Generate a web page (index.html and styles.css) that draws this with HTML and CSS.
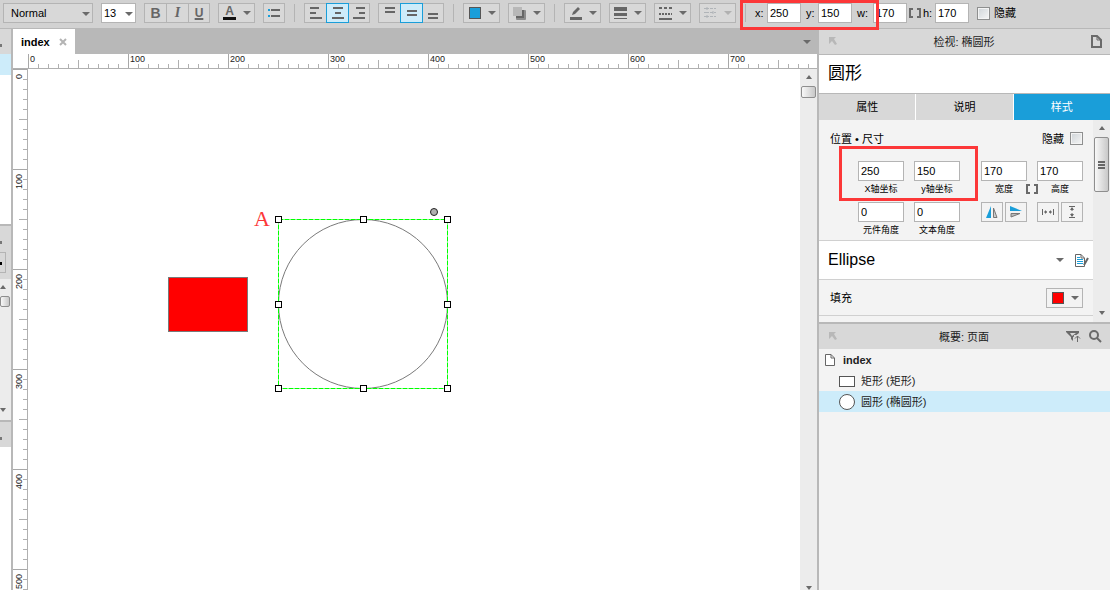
FILE: index.html
```html
<!DOCTYPE html>
<html lang="zh-CN">
<head>
<meta charset="utf-8">
<title>index</title>
<link rel="stylesheet" href="styles.css">
</head>
<body>
<svg class="defs" width="0" height="0" aria-hidden="true">
  <symbol id="caret" viewBox="0 0 8 4"><path d="M0 0H8L4 4Z" fill="#6a6a6a"/></symbol>
  <symbol id="up" viewBox="0 0 6 4"><path d="M3 0L6 4H0Z" fill="#6a6a6a"/></symbol>
  <symbol id="down" viewBox="0 0 6 4"><path d="M0 0H6L3 4Z" fill="#6a6a6a"/></symbol>
  <symbol id="brackets" viewBox="0 0 12 10"><path d="M4 1H1V9H4M8 1H11V9H8" fill="none" stroke="#6a6a6a" stroke-width="2"/></symbol>
  <symbol id="dock" viewBox="0 0 9 9"><path d="M1 0H8L6 2L9 7L7 8L4 4L1 7Z" fill="#b8b8b8"/></symbol>
</svg>
<div class="app">
  <header class="toolbar">
    <div class="combo font-style"><select aria-label="样式"><option>Normal</option></select><svg class="caret"><use href="#caret"/></svg></div>
    <div class="combo font-size"><select aria-label="字号"><option>13</option></select><svg class="caret"><use href="#caret"/></svg></div>
    <div class="group">
      <button class="tool bold" aria-label="粗体">B</button>
      <button class="tool italic" aria-label="斜体">I</button>
      <button class="tool underline" aria-label="下划线">U</button>
    </div>
    <button class="tool drop" aria-label="文字颜色"><span class="glyph">A</span><svg class="caret"><use href="#caret"/></svg></button>
    <button class="tool" aria-label="项目符号"><svg width="12" height="10"><path d="M0 2H2M0 8H2" stroke="#1a9ed9" stroke-width="2"/><path d="M3 2H12M3 8H12" stroke="#666" stroke-width="2"/></svg></button>
    <span class="sep"></span>
    <div class="group">
      <button class="tool" aria-label="左对齐"><svg width="12" height="12"><path d="M0 1H9M0 6H6M0 11H12" stroke="#666" stroke-width="2"/></svg></button>
      <button class="tool on" aria-label="居中"><svg width="12" height="12"><path d="M1 1H11M3 6H9M0 11H12" stroke="#666" stroke-width="2"/></svg></button>
      <button class="tool" aria-label="右对齐"><svg width="12" height="12"><path d="M3 1H12M6 6H12M0 11H12" stroke="#666" stroke-width="2"/></svg></button>
    </div>
    <div class="group">
      <button class="tool" aria-label="顶部对齐"><svg width="10" height="12"><path d="M0 1H10M0 5H10" stroke="#666" stroke-width="2"/></svg></button>
      <button class="tool on" aria-label="垂直居中"><svg width="10" height="12"><path d="M0 4H10M0 8H10" stroke="#666" stroke-width="2"/></svg></button>
      <button class="tool" aria-label="底部对齐"><svg width="10" height="12"><path d="M0 7H10M0 11H10" stroke="#666" stroke-width="2"/></svg></button>
    </div>
    <span class="sep"></span>
    <button class="tool drop" aria-label="填充"><span class="swatch blue"></span><svg class="caret"><use href="#caret"/></svg></button>
    <button class="tool drop" aria-label="阴影"><svg width="13" height="13"><rect x="3" y="3" width="10" height="10" rx="1" fill="#8c8c8c"/><rect x="3" y="3" width="8" height="8" fill="#666"/><rect x="0" y="0" width="9" height="9" fill="#b8b8b8"/></svg><svg class="caret"><use href="#caret"/></svg></button>
    <span class="sep"></span>
    <button class="tool drop" aria-label="线条颜色"><svg width="14" height="13"><path d="M1 11.500H13" stroke="#666" stroke-width="3"/><path d="M3 8L4 5L9 0L11 2L6 7Z" fill="#666"/></svg><svg class="caret"><use href="#caret"/></svg></button>
    <button class="tool drop" aria-label="线宽"><svg width="13" height="13"><path d="M0 2H13" stroke="#666" stroke-width="4"/><path d="M0 7.500H13" stroke="#666" stroke-width="3"/><path d="M0 11.500H13" stroke="#666"/></svg><svg class="caret"><use href="#caret"/></svg></button>
    <button class="tool drop" aria-label="线型"><svg width="13" height="13"><path d="M0 1H13" stroke="#666" stroke-width="2" stroke-dasharray="3 2"/><path d="M0 7H13" stroke="#666" stroke-width="2" stroke-dasharray="2 1"/><path d="M0 12H13" stroke="#666" stroke-width="2"/></svg><svg class="caret"><use href="#caret"/></svg></button>
    <button class="tool drop" disabled aria-label="箭头"><svg width="13" height="12"><path d="M0 1.500H12M0 5.500H12M0 9.500H12" stroke="#b0b4b8" stroke-dasharray="5 1 3 1"/><path d="M3 0V3M9 4V7M3 8V11" stroke="#b0b4b8"/></svg><svg class="caret faint"><use href="#caret"/></svg></button>
    <span class="sep"></span>
    <div class="coords">
      <label for="tx">x:</label><input id="tx" value="250">
      <label for="ty">y:</label><input id="ty" value="150">
      <label for="tw">w:</label><input id="tw" value="170">
      <svg class="lock" width="12" height="10"><use href="#brackets"/></svg>
      <label for="th">h:</label><input id="th" value="170">
    </div>
    <label class="check"><input type="checkbox">隐藏</label>
    <span class="mark mark-toolbar"></span>
  </header>

  <div class="workspace">
    <aside class="sliver">
      <div class="sliver-head"><i class="dot"></i></div>
      <div class="sliver-active"></div>
      <div class="sliver-page"></div>
      <div class="sliver-library"><i class="dot"></i><div class="sliver-drop"><i class="dot"></i></div></div>
      <div class="sliver-scroll"><svg class="arrow"><use href="#up"/></svg><span class="thumb"></span><svg class="arrow last"><use href="#down"/></svg></div>
      <div class="sliver-head second"><i class="dot"></i></div>
    </aside>

    <main class="editor">
      <div class="tabbar">
        <div class="page-tab">index <button class="close" aria-label="关闭"><svg width="8" height="8"><path d="M1 1L7 7M7 1L1 7" stroke="#b4b4b4" stroke-width="2"/></svg></button></div>
        <svg class="caret"><use href="#caret"/></svg>
      </div>
      <div class="ruler ruler-x"><span>0</span><span>100</span><span>200</span><span>300</span><span>400</span><span>500</span><span>600</span><span>700</span></div>
      <div class="stage">
        <div class="ruler ruler-y"><span><b>0</b></span><span><b>100</b></span><span><b>200</b></span><span><b>300</b></span><span><b>400</b></span><span><b>500</b></span></div>
        <div class="canvas">
          <div class="shape-rect"></div>
          <span class="note">A</span>
          <svg class="selection" width="178" height="189" viewBox="0 0 178 189">
            <circle cx="89" cy="100" r="84.500" fill="#fff" stroke="#7a7a7a"/>
            <path d="M4.500 15.500H173.500V184.500H4.500Z" fill="none" stroke="#0f0" stroke-dasharray="5 1"/>
            <circle cx="160" cy="8" r="3.500" fill="#b0b0b0" stroke="#222"/>
            <g fill="#fff" stroke="#000">
              <rect x="1.500" y="12.500" width="6" height="6"/><rect x="86.500" y="12.500" width="6" height="6"/><rect x="170.500" y="12.500" width="6" height="6"/>
              <rect x="1.500" y="97.500" width="6" height="6"/><rect x="170.500" y="97.500" width="6" height="6"/>
              <rect x="1.500" y="181.500" width="6" height="6"/><rect x="86.500" y="181.500" width="6" height="6"/><rect x="170.500" y="181.500" width="6" height="6"/>
            </g>
          </svg>
        </div>
        <div class="scroll canvas-scroll"><svg class="arrow"><use href="#up"/></svg><span class="thumb"></span><svg class="arrow last"><use href="#down"/></svg></div>
      </div>
    </main>

    <aside class="inspector">
      <div class="panel-head">
        <svg width="9" height="9"><use href="#dock"/></svg>
        <span class="panel-title">检视: 椭圆形</span>
        <svg width="11" height="13"><path d="M1 1H6L10 5V12H1Z" fill="none" stroke="#6a6a6a" stroke-width="2"/><path d="M6 1V5H10" fill="none" stroke="#6a6a6a"/></svg>
      </div>
      <div class="shape-name">圆形</div>
      <nav class="tabs"><button>属性</button><button>说明</button><button class="active">样式</button></nav>
      <div class="props">
        <div class="props-body">
          <section class="geometry">
            <div class="geometry-head"><span>位置 • 尺寸</span><label class="check reverse">隐藏<input type="checkbox"></label></div>
            <div class="fields">
              <div class="pair">
                <div class="field"><input id="px" value="250"><label for="px">X轴坐标</label></div>
                <div class="field"><input id="py" value="150"><label for="py">y轴坐标</label></div>
              </div>
              <div class="pair">
                <div class="field"><input id="pw" value="170"><label for="pw">宽度</label></div>
                <div class="field"><input id="ph" value="170"><label for="ph">高度</label></div>
                <svg class="link" width="12" height="10"><use href="#brackets"/></svg>
              </div>
              <div class="pair">
                <div class="field"><input id="pa" value="0"><label for="pa">元件角度</label></div>
                <div class="field"><input id="pt" value="0"><label for="pt">文本角度</label></div>
              </div>
              <div class="pair">
                <div class="icons">
                  <button aria-label="水平翻转"><svg width="12" height="12"><path d="M0 12L5 0V12Z" fill="#1a9ed9"/><path d="M7.500 2V11.500H11Z" fill="#ccc" stroke="#777"/></svg></button>
                  <button aria-label="垂直翻转"><svg width="12" height="12"><path d="M0 0L12 5H0Z" fill="#1a9ed9"/><path d="M1 7.500H10L1 11Z" fill="#bbb" stroke="#777"/></svg></button>
                </div>
                <div class="icons">
                  <button aria-label="适合宽度"><svg width="12" height="8"><path d="M.5 1V7M11.500 1V7M2 4H5M7 4H10" stroke="#666"/><path d="M5 4L3 2V6ZM7 4L9 2V6Z" fill="#666"/></svg></button>
                  <button aria-label="适合高度"><svg width="8" height="12"><path d="M1 .5H7M1 11.500H7M4 2V5M4 7V10" stroke="#666"/><path d="M4 1L2 4H6ZM4 11L2 8H6Z" fill="#666"/></svg></button>
                </div>
              </div>
            </div>
            <span class="mark mark-geometry"></span>
          </section>
          <div class="style-row">
            <span>Ellipse</span>
            <svg class="caret"><use href="#caret"/></svg>
            <svg width="14" height="13"><path d="M.5 .5H6L9.500 4V12.500H.5Z" fill="#fff" stroke="#666"/><path d="M6 .5V4H9" fill="none" stroke="#666"/><path d="M2 3.500H5M2 5.500H8M2 7.500H8M2 9.500H8" stroke="#1a9ed9"/><path d="M13 4L9 11" stroke="#666" stroke-width="2"/></svg>
          </div>
          <div class="fill-row"><span>填充</span><button class="fill-button" aria-label="填充颜色"><span class="swatch red"></span><svg class="caret"><use href="#caret"/></svg></button></div>
        </div>
        <div class="scroll props-scroll"><svg class="arrow"><use href="#up"/></svg><span class="thumb"><i class="grip"></i></span><svg class="arrow last"><use href="#down"/></svg></div>
      </div>
      <div class="panel-head outline-head">
        <svg width="9" height="9"><use href="#dock"/></svg>
        <span class="panel-title">概要: 页面</span>
        <svg width="15" height="11"><path d="M0 0H13V2L9 5L7 6V10L5 8V6L0 1Z" fill="#6a6a6a"/><path d="M4 2H10L6 5Z" fill="#d8d8d8"/><path d="M8 4H15V11H8Z" fill="#d8d8d8"/><path d="M11.500 11V5M9 7.500L11.500 5L14 7.500" fill="none" stroke="#6a6a6a"/></svg>
        <svg width="13" height="13"><circle cx="5" cy="5" r="4" fill="none" stroke="#6a6a6a" stroke-width="2"/><path d="M8 8L12 12" stroke="#6a6a6a" stroke-width="2"/></svg>
      </div>
      <ul class="outline">
        <li class="root"><svg width="10" height="12"><path d="M.5 .5H6L9.500 4V11.500H.5Z" fill="#fff" stroke="#666"/><path d="M6 .5V4H9" fill="none" stroke="#666"/></svg>index</li>
        <li><svg width="16" height="16"><rect x=".5" y="3.500" width="15" height="10" fill="#fff" stroke="#555"/></svg>矩形 (矩形)</li>
        <li class="selected"><svg width="16" height="16"><circle cx="8" cy="8" r="7.500" fill="#fff" stroke="#555"/></svg>圆形 (椭圆形)</li>
      </ul>
    </aside>
  </div>
</div>
</body>
</html>
```
FILE: styles.css
```css
* { box-sizing: border-box; }
body {
  margin: 0;
  font: 11px/14px "Liberation Sans", "Noto Sans CJK SC", sans-serif;
  color: #000;
}
button, input, select { font: inherit; color: inherit; border-radius: 0; margin: 0; padding: 0; }
svg { flex: none; display: block; }
.defs { position: absolute; }
.caret { width: 8px; height: 4px; }
.faint { opacity: .35; }
.arrow { width: 6px; height: 4px; }
.arrow.last { margin-top: auto; }
.app { height: 100vh; display: flex; flex-direction: column; overflow: hidden; }

/* Toolbar */
.toolbar {
  position: relative;
  flex: none;
  display: flex;
  gap: 8px;
  padding: 3px 3px 5px;
  background: #d2d2d2;
  border-bottom: 1px solid #b8b8b8;
}
.combo { position: relative; height: 20px; }
.combo select {
  appearance: none;
  width: 100%;
  height: 20px;
  padding: 0 16px 0 7px;
  border: 1px solid #b4b4b4;
  background: #d8d8d8;
}
.combo .caret { position: absolute; right: 3px; top: 9px; pointer-events: none; }
.font-style { width: 90px; }
.font-size { width: 35px; }
.font-size select { background: #fff; padding: 0 12px 0 2px; }
.group { display: flex; }
.tool {
  width: 23px;
  height: 20px;
  display: flex;
  align-items: center;
  justify-content: center;
  border: 1px solid #b4b4b4;
  background: #d8d8d8;
  color: #666;
}
.toolbar > .tool { width: 22px; }
.group .tool + .tool { margin-left: -1px; }
.group .tool:last-child { width: 22px; }
.toolbar > .tool.drop { width: 37px; justify-content: space-between; padding: 0 3px 0 4px; }
.tool.on { background: #cdecfa; border-color: #1a9ed9; z-index: 1; }
.bold { font-size: 14px; font-weight: bold; }
.italic { font: italic bold 14px/14px "Liberation Serif", serif; }
.underline { font-size: 12px; font-weight: bold; text-decoration: underline; text-decoration-thickness: 2px; }
.glyph { width: 13px; font-size: 12px; font-weight: bold; line-height: 11px; border-bottom: 3px solid #111; }
.swatch { width: 12px; height: 12px; border: 1px solid #555; }
.blue { background: #1a9ed9; margin-left: 1px; }
.red { background: #f00; }
.sep { width: 1px; height: 18px; margin: 1px 1px 0; background: #b4b4b4; }
.coords { display: flex; align-items: center; height: 20px; }
.coords label { width: 12px; }
.coords input { width: 34px; height: 20px; padding: 0 2px; border: 1px solid #b4b4b4; background: #fff; }
.coords input + label { margin-left: 5px; }
.coords label[for="tw"] { width: 16px; }
.coords .lock { margin: 0 2px; }
.check { display: flex; align-items: center; gap: 4px; }
.check input {
  appearance: none;
  width: 13px;
  height: 13px;
  border: 1px solid #8e8f8f;
  background: linear-gradient(135deg, #cfd4d8, #f6f6f6);
  box-shadow: inset 0 0 0 1px #f4f4f4;
}
.check.reverse { gap: 6px; }
.mark { position: absolute; border: 3px solid #fc3738; pointer-events: none; z-index: 2; }
.mark-toolbar { left: 740px; top: 0; width: 139px; height: 30px; }

/* Workspace columns */
.workspace { flex: 1; min-height: 0; display: flex; }
.sliver { flex: none; width: 13px; display: flex; flex-direction: column; border-right: 2px solid #b8b8b8; background: #fff; }
.sliver-head { height: 25px; padding-top: 15px; background: #d8d8d8; }
.sliver-head.second { border-top: 2px solid #b8b8b8; height: 27px; }
.dot { display: block; width: 2px; height: 3px; background: #777; }
.sliver-active { height: 21px; background: #cdecfa; }
.sliver-page { height: 149px; }
.sliver-library { height: 55px; padding-top: 15px; border-top: 2px solid #b8b8b8; background: #d8d8d8; }
.sliver-drop { width: 6px; height: 21px; margin-top: 8px; padding-top: 9px; border: 1px solid #b4b4b4; border-left: 0; }
.sliver-drop .dot { background: #000; }
.sliver-scroll { height: 141px; display: flex; flex-direction: column; padding: 6px 0 8px; background: #ececec; }
.sliver-scroll .thumb { width: 10px; height: 11px; margin-top: 7px; }
.thumb { border: 1px solid #8e8e8e; border-radius: 2px; background: linear-gradient(90deg, #f8f8f8, #c8c8c8); }

/* Editor */
.editor { flex: 1; min-width: 0; display: flex; flex-direction: column; }
.tabbar { height: 25px; display: flex; align-items: center; justify-content: space-between; padding-right: 6px; background: #b8b8b8; }
.page-tab { display: flex; align-items: center; gap: 9px; height: 25px; padding: 1px 8px 0; background: #fff; font-weight: bold; }
.close { border: 0; background: none; }
.ruler { font-size: 9px; line-height: 10px; background: #fff; overflow: hidden; color: #222; }
.ruler span { flex: none; border: 0 solid #a8a8a8; }
.ruler-x { flex: none; display: flex; height: 15px; padding-left: 15px; border-bottom: 1px solid #b0b0b0; }
.ruler-x span {
  width: 100px;
  padding-left: 1px;
  border-left-width: 1px;
  background:
    linear-gradient(#b0b0b0, #b0b0b0) 49px 6px / 1px 9px no-repeat,
    repeating-linear-gradient(90deg, transparent 0 9px, #b0b0b0 9px 10px) 0 10px / 99px 4px no-repeat;
}
.stage { flex: 1; min-height: 0; display: flex; }
.ruler-y { flex: none; width: 15px; display: flex; flex-direction: column; border-right: 1px solid #b0b0b0; }
.ruler-y span {
  height: 100px;
  padding: 4px 0 0 1px;
  border-top-width: 1px;
  background:
    linear-gradient(#b0b0b0, #b0b0b0) 6px 49px / 9px 1px no-repeat,
    repeating-linear-gradient(180deg, transparent 0 9px, #b0b0b0 9px 10px) 10px 0 / 4px 99px no-repeat;
}
.ruler-y b { display: block; width: 10px; font-weight: normal; writing-mode: vertical-rl; transform: rotate(180deg); }
.canvas { position: relative; flex: 1; min-width: 0; background: #fff; overflow: hidden; }
.shape-rect { position: absolute; left: 140px; top: 208px; width: 80px; height: 55px; background: #f00; border: 1px solid #797979; }
.note { position: absolute; left: 226px; top: 138px; font: 22px/24px "Liberation Serif", serif; color: #fc3738; }
.selection { position: absolute; left: 246px; top: 135px; }
.scroll { flex: none; display: flex; flex-direction: column; align-items: center; background: #ececec; }
.canvas-scroll { width: 17px; padding-top: 6px; }
.canvas-scroll .thumb { width: 15px; height: 12px; margin-top: 7px; }

/* Inspector */
.inspector { flex: none; width: 293px; display: flex; flex-direction: column; border-left: 2px solid #b8b8b8; background: #f3f3f3; }
.panel-head { flex: none; display: flex; align-items: center; gap: 8px; height: 26px; padding: 0 8px 0 9px; background: #d8d8d8; border-bottom: 1px solid #b8b8b8; color: #222; }
.panel-title { flex: 1; text-align: center; }
.shape-name { padding: 6px 9px 7px; font-size: 17px; line-height: 25px; background: #fff; border-bottom: 1px solid #b8b8b8; }
.tabs { display: flex; gap: 1px; background: #fff; }
.tabs button { flex: 1; height: 26px; border: 0; background: #d8d8d8; }
.tabs .active { background: #1a9ed9; color: #fff; }
.props { display: flex; }
.props-body { flex: 1; padding-bottom: 6px; }
.geometry { position: relative; padding: 11px 10px 4px 11px; border-bottom: 1px solid #d0d0d0; }
.geometry-head { display: flex; align-items: center; justify-content: space-between; height: 15px; }
.fields { display: grid; grid-template-columns: auto auto; justify-content: end; gap: 7px 21px; margin-top: 15px; }
.pair { position: relative; display: flex; gap: 10px; }
.field { width: 46px; height: 34px; display: flex; flex-direction: column; align-items: center; }
.field input { width: 46px; height: 20px; padding: 0 2px; border: 1px solid #b4b4b4; background: #fff; }
.field label { padding-top: 2px; font-size: 9px; line-height: 12px; white-space: nowrap; }
.link { position: absolute; left: 45px; top: 23px; }
.icons { display: flex; justify-content: space-between; width: 46px; }
.icons button { display: flex; align-items: center; justify-content: center; width: 22px; height: 20px; border: 1px solid #b4b4b4; background: #f3f3f3; }
.mark-geometry { left: 20px; top: 26px; width: 139px; height: 55px; }
.style-row { display: flex; align-items: center; gap: 11px; height: 39px; padding: 0 4px 0 9px; background: #fff; border-bottom: 1px solid #d0d0d0; font-size: 16px; line-height: 20px; }
.style-row span { flex: 1; }
.fill-row { display: flex; align-items: center; justify-content: space-between; height: 36px; padding: 0 10px 0 11px; border-bottom: 1px solid #d0d0d0; }
.fill-button { display: flex; align-items: center; justify-content: space-between; width: 37px; height: 20px; padding: 0 3px 0 5px; border: 1px solid #b4b4b4; background: #f3f3f3; }
.props-scroll { width: 17px; padding: 6px 0 7px; }
.props-scroll .thumb { display: flex; align-items: center; justify-content: center; width: 15px; height: 55px; margin-top: 7px; }
.grip { width: 7px; height: 8px; background: repeating-linear-gradient(#666 0 2px, transparent 2px 3px); }
.outline-head { height: 27px; border-top: 2px solid #b8b8b8; border-bottom: 0; }
.outline-head .panel-title { padding-left: 25px; }
.outline { flex: 1; margin: 0; padding: 0; list-style: none; }
.outline li { display: flex; align-items: center; gap: 6px; height: 21px; padding-left: 20px; color: #222; }
.outline .root { padding-left: 6px; gap: 8px; font-weight: bold; }
.outline .selected { background: #cdecfa; }
```
